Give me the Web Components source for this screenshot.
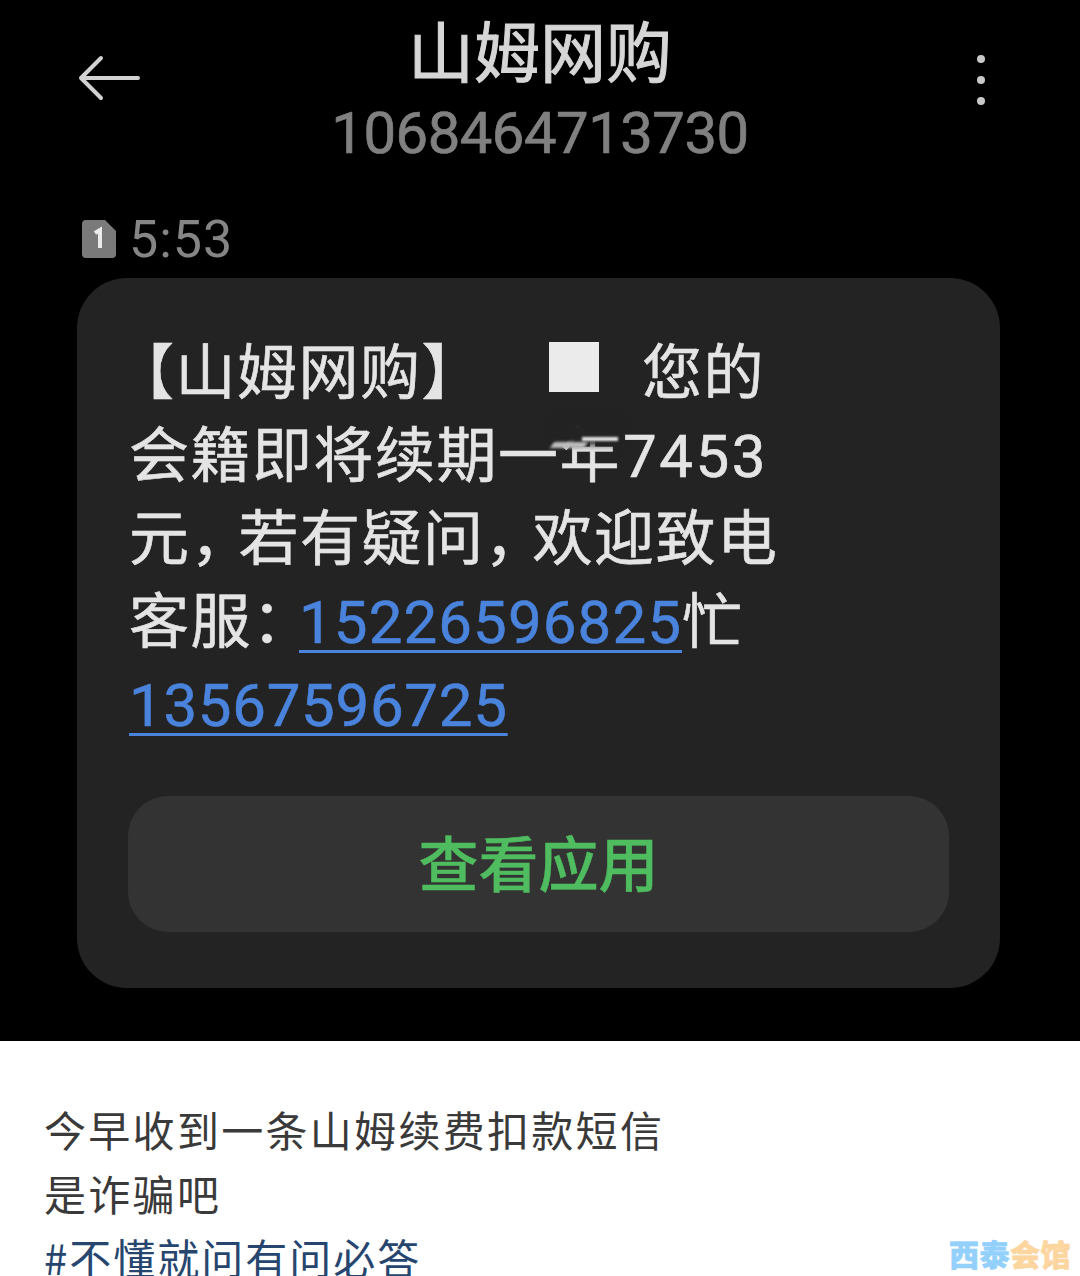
<!DOCTYPE html>
<html lang="zh">
<head>
<meta charset="utf-8">
<title>山姆网购</title>
<style>
  html, body { margin: 0; height: 1276px; overflow: hidden; background: #000; }
  body { font-family: Roboto, "Noto Sans CJK SC", sans-serif; }
  /* narrower punctuation, the phone font sets these tighter than full width */
  .open { margin-left: -15px; }
  .comma { letter-spacing: -12px; }
  .colon { letter-spacing: -13px; }
  .amount { letter-spacing: 2.5px; margin-left: 2px; }
</style>
</head>
<body>
<sms-screen>
  <sms-header slot="top" name="山姆网购" number="1068464713730"></sms-header>
  <sms-stamp slot="top" time="5:53"></sms-stamp>
  <sms-bubble slot="top" action="查看应用">
    <div><span class="open">【</span>山姆网购】<sms-redact></sms-redact>您的</div>
    <div>会籍即将续期<span style="position:relative">一年<sms-smear></sms-smear></span><span class="amount">7453</span></div>
    <div>元<span class="comma">，</span>若有疑问<span class="comma">，</span>欢迎致电</div>
    <div>客服<span class="colon">：</span><sms-link style="letter-spacing:1.1px">15226596825</sms-link>忙</div>
    <div><sms-link style="letter-spacing:.7px">13567596725</sms-link></div>
  </sms-bubble>
  <post-caption slot="bottom">
    <div>今早收到一条山姆续费扣款短信</div>
    <div>是诈骗吧</div>
    <div style="color:#26466f;letter-spacing:2px">#不懂就问有问必答</div>
  </post-caption>
</sms-screen>
<script>
  class SmsScreen extends HTMLElement {
    constructor() {
      super();
      this.attachShadow({ mode: 'open' }).innerHTML = `
        <style>
          :host { display: flex; flex-direction: column; width: 1080px; height: 1276px; overflow: hidden; position: relative; }
          .dark { background: #000; height: 1041px; flex: none; box-sizing: border-box; display: flex; flex-direction: column; }
          .light { background: #fff; flex: 1; min-height: 0; position: relative; overflow: hidden; }
          .mark { position: absolute; right: 9px; bottom: 6px; font: 900 30px/34px "Noto Sans CJK SC", sans-serif; letter-spacing: .5px; white-space: nowrap; -webkit-text-stroke: .6px currentColor; }
          .mark b { color: #93d0fb; font-weight: 900; }
          .mark i { color: #fcd59f; font-weight: 900; font-style: normal; }
        </style>
        <div class="dark"><slot name="top"></slot></div>
        <div class="light">
          <slot name="bottom"></slot>
          <div class="mark"><b>西泰</b><i>会馆</i></div>
        </div>`;
    }
  }

  class SmsHeader extends HTMLElement {
    constructor() {
      super();
      this.attachShadow({ mode: 'open' }).innerHTML = `
        <style>
          :host { display: grid; grid-template-columns: 140px 1fr 140px; height: 166px; align-items: start; }
          .back { padding: 55px 0 0 78px; }
          .back svg { display: block; }
          .mid { text-align: center; }
          .name { font: 400 66px/72px "Noto Sans CJK SC", sans-serif; color: #d6d6d6; margin-top: 12px; -webkit-text-stroke: 1px #d6d6d6; }
          .num { font: 400 58px/60px Roboto, sans-serif; color: #808080; letter-spacing: -.5px; margin-top: 19px; -webkit-text-stroke: .7px #808080; }
          .more { display: flex; flex-direction: column; gap: 13px; align-items: center; padding: 55px 58px 0 0; }
          .more span { width: 8px; height: 8px; border-radius: 50%; background: #c8c8c8; }
        </style>
        <div class="back">
          <svg width="64" height="46" viewBox="0 0 64 46" fill="none" stroke="#d2d2d2" stroke-width="4" stroke-linecap="round" stroke-linejoin="round">
            <path d="M60 23H3M23 3 3 23 23 43"/>
          </svg>
        </div>
        <div class="mid">
          <div class="name"></div>
          <div class="num"></div>
        </div>
        <div class="more"><span></span><span></span><span></span></div>`;
    }
    connectedCallback() {
      this.shadowRoot.querySelector('.name').textContent = this.getAttribute('name');
      this.shadowRoot.querySelector('.num').textContent = this.getAttribute('number');
    }
  }

  class SmsStamp extends HTMLElement {
    constructor() {
      super();
      this.attachShadow({ mode: 'open' }).innerHTML = `
        <style>
          :host { display: flex; align-items: center; gap: 13px; height: 112px; padding-left: 82px; box-sizing: border-box; padding-top: 34px; }
          svg { display: block; }
          .t { font: 400 52px/56px Roboto, sans-serif; color: #858585; letter-spacing: 1px; padding-top: 1px; }
        </style>
        <svg width="34" height="38" viewBox="0 0 34 38">
          <path d="M4 0H23L34 11V34a4 4 0 0 1-4 4H4a4 4 0 0 1-4-4V4a4 4 0 0 1 4-4Z" fill="#7a7a7a"/>
          <path d="M13 13l5-3v18" fill="none" stroke="#ececec" stroke-width="4"/>
        </svg>
        <span class="t"></span>`;
    }
    connectedCallback() {
      this.shadowRoot.querySelector('.t').textContent = this.getAttribute('time');
    }
  }

  class SmsBubble extends HTMLElement {
    constructor() {
      super();
      this.attachShadow({ mode: 'open' }).innerHTML = `
        <style>
          :host { display: block; margin-left: 77px; width: 923px; height: 710px; box-sizing: border-box; background: #232323; border-radius: 50px; padding: 54px 51px 0 52px; }
          .body { font: 400 60px/83px Roboto, "Noto Sans CJK SC", sans-serif; color: #e4e4e4; letter-spacing: 1.5px; white-space: nowrap; height: 464px; -webkit-text-stroke: .6px currentColor; }
          .btn { height: 136px; margin-left: -1px; padding-bottom: 6px; box-sizing: border-box; border-radius: 40px; background: #333; color: #4fbd5f; display: flex; align-items: center; justify-content: center; font: 500 60px/1 "Noto Sans CJK SC", sans-serif; -webkit-text-stroke: .4px #4fbd5f; }
        </style>
        <div class="body"><slot></slot></div>
        <div class="btn"></div>`;
    }
    connectedCallback() {
      this.shadowRoot.querySelector('.btn').textContent = this.getAttribute('action');
    }
  }

  class SmsLink extends HTMLElement {
    constructor() {
      super();
      this.attachShadow({ mode: 'open' }).innerHTML = `
        <style>
          :host { display: inline-block; color: #4a83dc; text-decoration: underline; text-decoration-thickness: 3px; text-underline-offset: 7px; -webkit-text-stroke: .6px #4a83dc; }
        </style>
        <slot></slot>`;
    }
  }

  // white square that hides a word in the message
  class SmsRedact extends HTMLElement {
    constructor() {
      super();
      this.attachShadow({ mode: 'open' }).innerHTML = `
        <style>
          :host { display: inline-block; width: 50px; height: 50px; background: #ebebeb; margin: 0 43px 0 66px; vertical-align: 2px; }
        </style>`;
    }
  }

  // smudge left by the editing over the word
  class SmsSmear extends HTMLElement {
    constructor() {
      super();
      this.attachShadow({ mode: 'open' }).innerHTML = `
        <style>
          :host { position: absolute; left: 52px; top: 0; width: 70px; height: 34px; pointer-events: none; }
          .cover { position: absolute; inset: 0 0 10px; background: #232323; filter: blur(3px); }
          .streak { position: absolute; left: 2px; top: 21px; width: 34px; height: 6px; background: #bdbdbd; filter: blur(1.5px); transform: skewX(-30deg); }
          .top { position: absolute; left: 32px; top: 16px; width: 36px; height: 4px; background: #e4e4e4; filter: blur(1px); }
        </style>
        <div class="cover"></div><div class="streak"></div><div class="top"></div>`;
    }
  }

  class PostCaption extends HTMLElement {
    constructor() {
      super();
      this.attachShadow({ mode: 'open' }).innerHTML = `
        <style>
          :host { display: block; padding: 56px 0 0 44px; font: 400 42px/64px "Noto Sans CJK SC", sans-serif; color: #3a3a3a; letter-spacing: 2.3px; white-space: nowrap; }
        </style>
        <slot></slot>`;
    }
  }

  customElements.define('sms-screen', SmsScreen);
  customElements.define('sms-header', SmsHeader);
  customElements.define('sms-stamp', SmsStamp);
  customElements.define('sms-bubble', SmsBubble);
  customElements.define('sms-link', SmsLink);
  customElements.define('sms-redact', SmsRedact);
  customElements.define('sms-smear', SmsSmear);
  customElements.define('post-caption', PostCaption);
</script>
</body>
</html>
